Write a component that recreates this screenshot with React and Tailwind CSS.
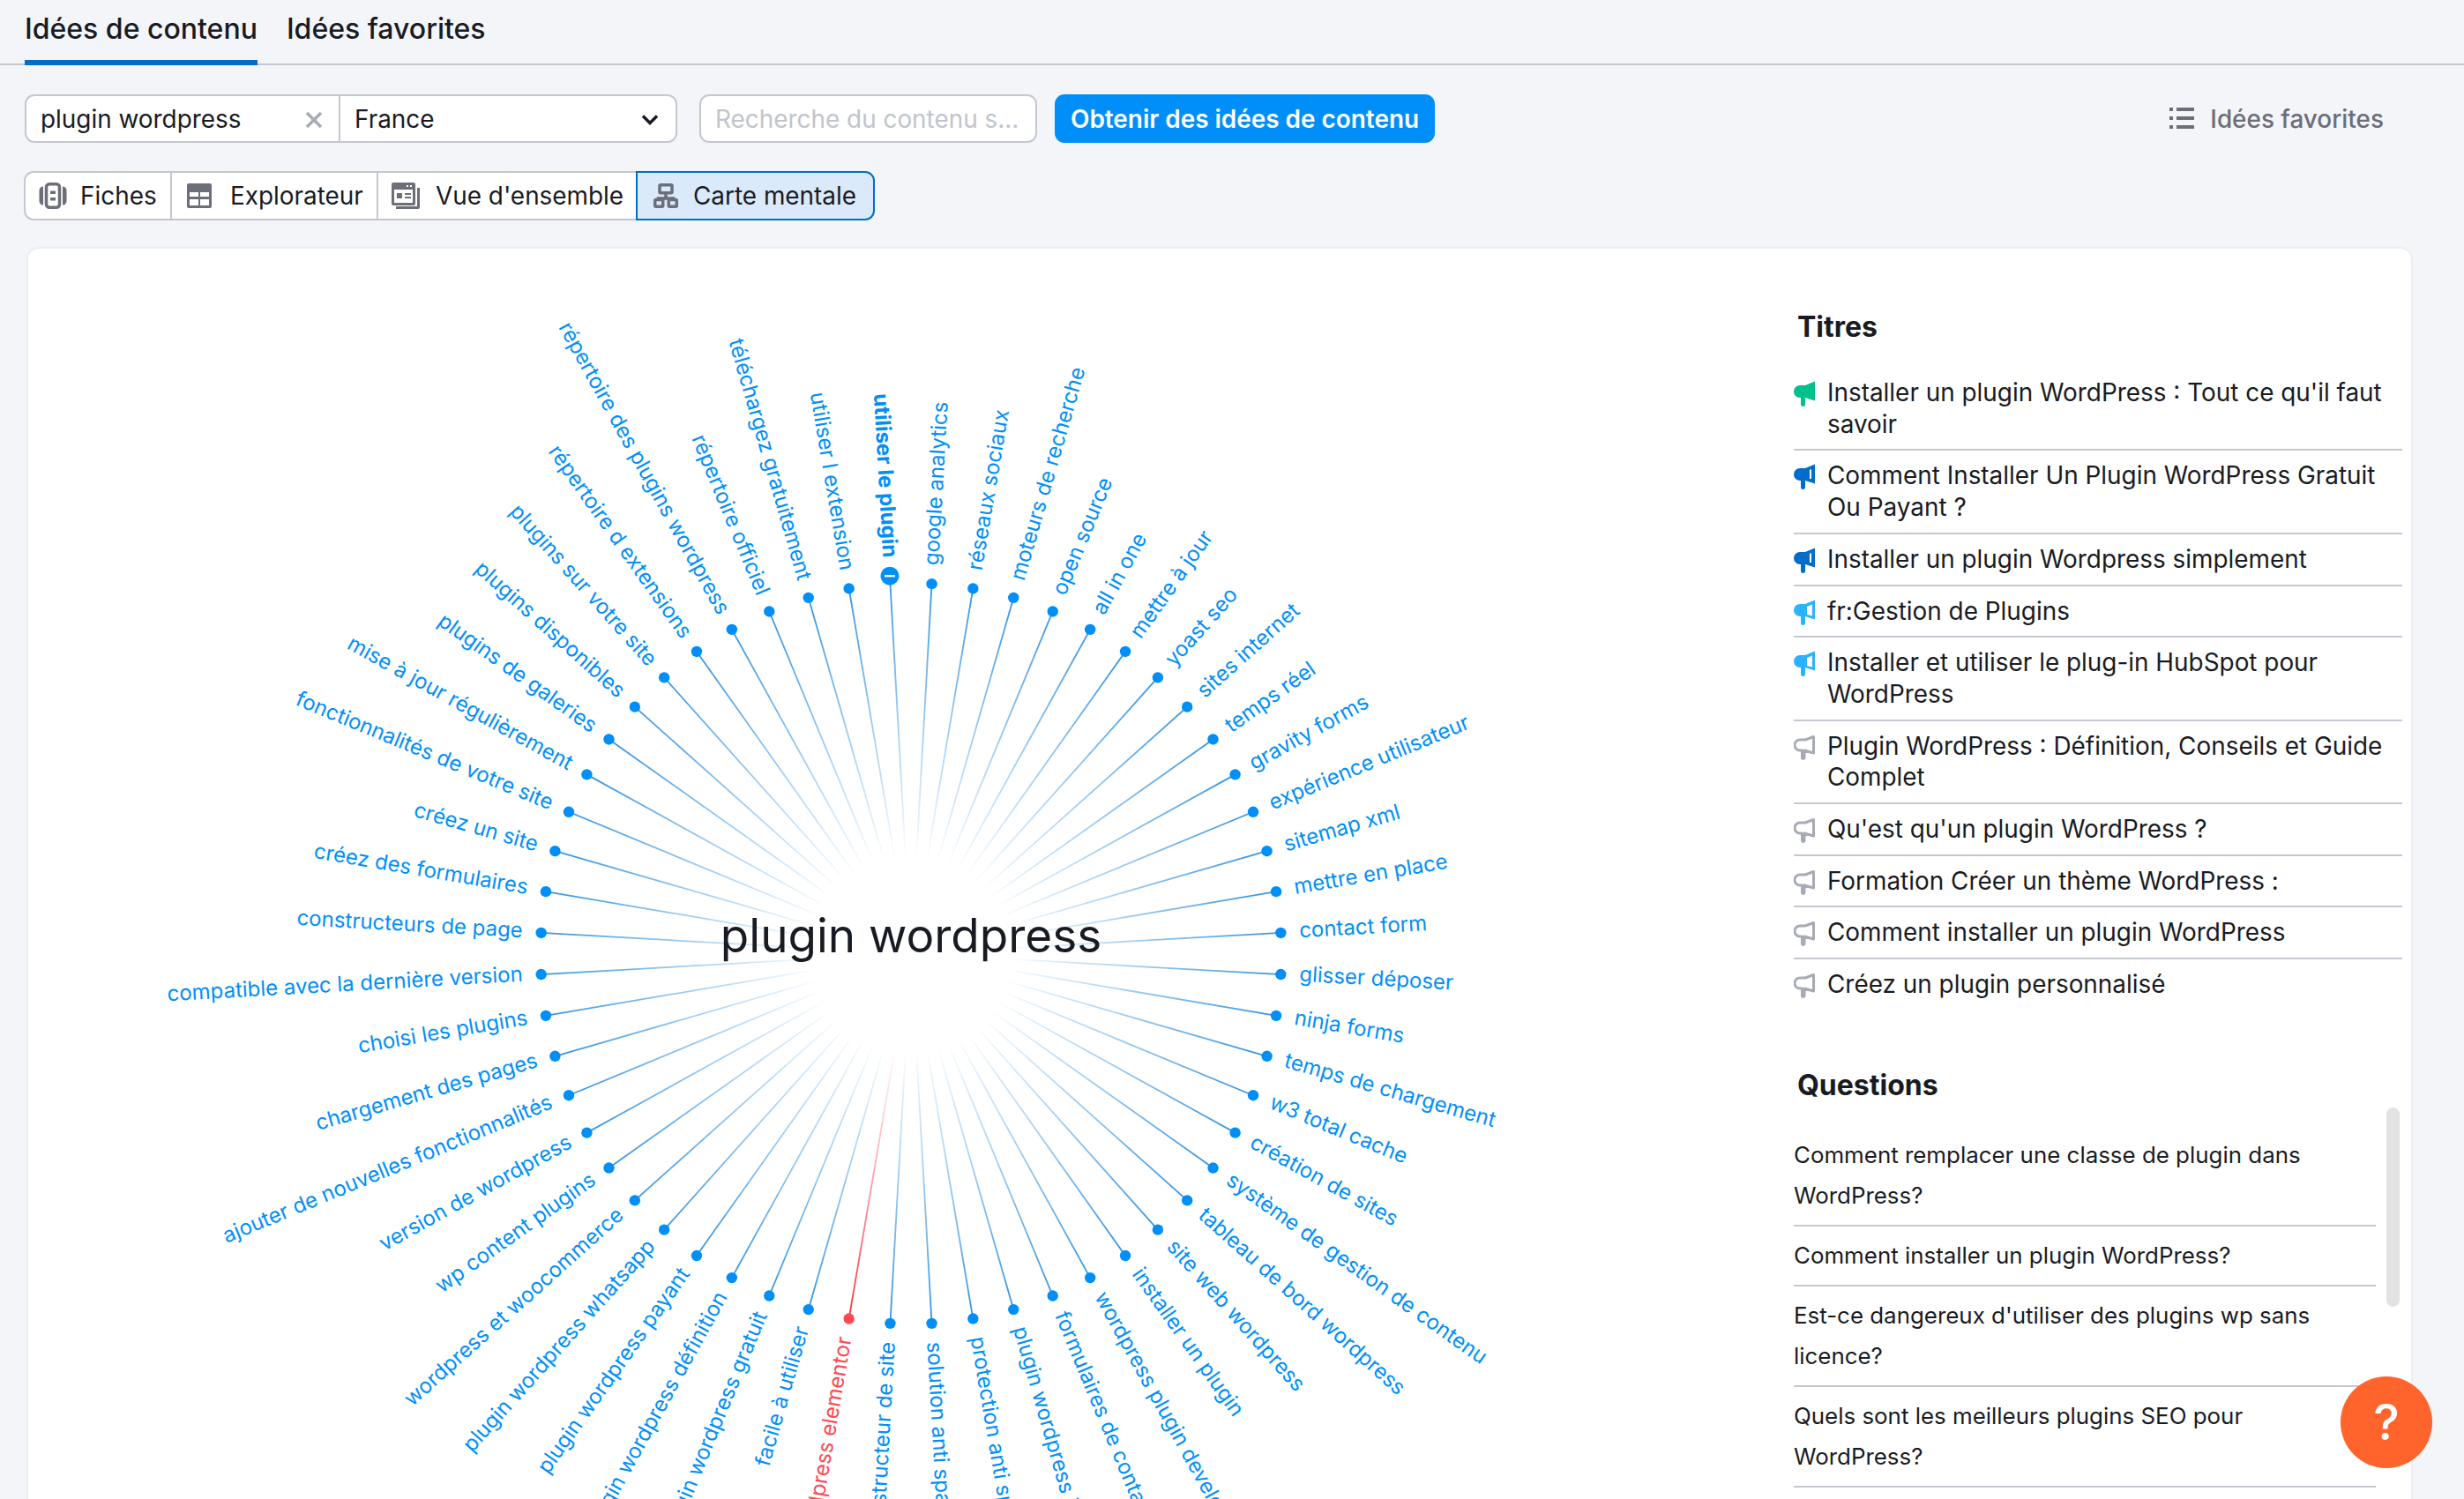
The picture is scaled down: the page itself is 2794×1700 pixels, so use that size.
import React from "react";

const LABELS = [
  "google analytics","réseaux sociaux","moteurs de recherche","open source","all in one","mettre à jour","yoast seo","sites internet","temps réel","gravity forms","expérience utilisateur","sitemap xml","mettre en place","contact form",
  "glisser déposer","ninja forms","temps de chargement","w3 total cache","création de sites","système de gestion de contenu","tableau de bord wordpress","site web wordpress","installer un plugin","wordpress plugin development","formulaires de contact","plugin wordpress installer","protection anti spam","solution anti spam",
  "constructeur de site","wordpress elementor","facile à utiliser","plugin wordpress gratuit","plugin wordpress définition","plugin wordpress payant","plugin wordpress whatsapp","wordpress et woocommerce","wp content plugins","version de wordpress","ajouter de nouvelles fonctionnalités","chargement des pages","choisi les plugins","compatible avec la dernière version",
  "constructeurs de page","créez des formulaires","créez un site","fonctionnalités de votre site","mise à jour régulièrement","plugins de galeries","plugins disponibles","plugins sur votre site","répertoire d extensions","répertoire des plugins wordpress","répertoire officiel","téléchargez gratuitement","utiliser l extension","utiliser le plugin",
];

const CX = 1001, CY = 799.5, R = 420, FADE = 110;

function MindMap() {
  return (
    <svg width="2002" height="1420" className="block shrink-0" style={{ fontFamily: "Inter, sans-serif" }}>
      <defs>
        {LABELS.map((_, i) => {
          const t = ((3.2143 + 6.42857 * i) * Math.PI) / 180;
          const r = i === 55 ? 429 : R;
          const red = i === 29;
          return (
            <linearGradient key={i} id={`g${i}`} gradientUnits="userSpaceOnUse"
              x1={CX + FADE * Math.sin(t)} y1={CY - FADE * Math.cos(t)}
              x2={CX + r * Math.sin(t)} y2={CY - r * Math.cos(t)}>
              <stop offset="0" stopColor={red ? "#ff4953" : "#0f80dc"} stopOpacity="0" />
              <stop offset="1" stopColor={red ? "#ff2f3b" : "#0f80dc"} stopOpacity={red ? 1 : 0.85} />
            </linearGradient>
          );
        })}
      </defs>
      {LABELS.map((label, i) => {
        const deg = 3.2143 + 6.42857 * i;
        const t = (deg * Math.PI) / 180;
        const selected = i === 55;
        const red = i === 29;
        const r = selected ? 429 : R;
        const x = CX + r * Math.sin(t);
        const y = CY - r * Math.cos(t);
        const lx = CX + (r + 21) * Math.sin(t);
        const ly = CY - (r + 21) * Math.cos(t);
        const right = deg < 180;
        const color = red ? "#ff4953" : "#008ff8";
        return (
          <g key={label}>
            <line x1={CX + FADE * Math.sin(t)} y1={CY - FADE * Math.cos(t)} x2={x} y2={y} stroke={`url(#g${i})`} strokeWidth="1.8" />
            <circle cx={x} cy={y} r={selected ? 10.5 : 6.2} fill={color} />
            {selected && <rect x={x - 6} y={y - 1.2} width="12" height="2.4" fill="#fff" />}
            <text x={lx} y={ly} fontSize="24" fontWeight={selected ? 700 : 400} fill={color} dy="0.27em"
              textAnchor={right ? "start" : "end"}
              transform={`rotate(${right ? deg - 90 : deg + 90} ${lx} ${ly})`}>
              {label}
            </text>
          </g>
        );
      })}
      <text x={CX} y={CY - 1.5} textAnchor="middle" fontSize="53" fill="#191b23">plugin wordpress</text>
    </svg>
  );
}

const BASE = "M24 1.5 13 6H7a7 7 0 0 0 0 14h1v7.5a2.5 2.5 0 0 0 5 0V20l11 3.5Z";

function Megaphone({ kind }) {
  if (kind === "green") return (
    <svg width="24" height="30" viewBox="0 0 24 30" className="shrink-0 mt-[3px]"><path d={BASE} fill="#00c08b" /></svg>
  );
  if (kind === "dark") return (
    <svg width="24" height="30" viewBox="0 0 24 30" className="shrink-0 mt-[3px]">
      <path d={BASE} fill="#006dca" />
      <path d="M19 7.5v10.5" stroke="#fff" strokeWidth="2" />
    </svg>
  );
  if (kind === "light") return (
    <svg width="24" height="30" viewBox="0 0 24 30" className="shrink-0 mt-[3px]">
      <path d={BASE} fill="#2bb3ff" />
      <path d="M15 9 21 6.5v13L15 18Z" fill="#fff" />
    </svg>
  );
  return (
    <svg width="24" height="30" viewBox="0 0 24 30" className="shrink-0 mt-[3px]">
      <path d="M22.5 3.5 13 7H7a6 6 0 0 0 0 12h2.500v8.500a1.300 1.300 0 0 0 2.500 0V19l10.500 3Z" fill="none" stroke="#a8abb5" strokeWidth="3" strokeLinejoin="round" />
    </svg>
  );
}

const TITLES = [
  ["green", "Installer un plugin WordPress : Tout ce qu'il faut savoir"],
  ["dark", "Comment Installer Un Plugin WordPress Gratuit Ou Payant ?"],
  ["dark", "Installer un plugin Wordpress simplement"],
  ["light", "fr:Gestion de Plugins"],
  ["light", "Installer et utiliser le plug-in HubSpot pour WordPress"],
  ["grey", "Plugin WordPress : Définition, Conseils et Guide Complet"],
  ["grey", "Qu'est qu'un plugin WordPress ?"],
  ["grey", "Formation Créer un thème WordPress :"],
  ["grey", "Comment installer un plugin WordPress"],
  ["grey", "Créez un plugin personnalisé"],
];

const QUESTIONS = [
  "Comment remplacer une classe de plugin dans WordPress?",
  "Comment installer un plugin WordPress?",
  "Est-ce dangereux d'utiliser des plugins wp sans licence?",
  "Quels sont les meilleurs plugins SEO pour WordPress?",
];

const IconFiches = () => (
  <svg width="32" height="30" viewBox="0 0 32 30" fill="#6c6e79">
    <path d="M5 4.500a4.500 4.500 0 0 0-4.500 4.500v12a4.500 4.500 0 0 0 4.500 4.500Z" />
    <path d="M27 4.500a4.500 4.500 0 0 1 4.500 4.500v12a4.500 4.500 0 0 1-4.500 4.500Z" />
    <rect x="8.500" y="1.750" width="15" height="26.500" rx="3.500" fill="none" stroke="#6c6e79" strokeWidth="3.500" />
    <rect x="13" y="9.500" width="6" height="3.500" />
    <rect x="13" y="17" width="6" height="3.500" />
  </svg>
);
const IconTable = () => (
  <svg width="28" height="28" viewBox="0 0 28 28" fill="#6c6e79">
    <path fillRule="evenodd" d="M2 0h24a2 2 0 0 1 2 2v24a2 2 0 0 1-2 2H2a2 2 0 0 1-2-2V2a2 2 0 0 1 2-2Zm1 10v5h10V10Zm12 0v5h10V10ZM3 18v7h10v-7Zm12 0v7h10v-7Z" />
  </svg>
);
const IconVue = () => (
  <svg width="32" height="30" viewBox="0 0 32 30" fill="#6c6e79">
    <path fillRule="evenodd" d="M2 0h23a2 2 0 0 1 2 2v22a2 2 0 0 1-2 2H2a2 2 0 0 1-2-2V2a2 2 0 0 1 2-2Zm1 8v15h21V8Zm14-5v2h2V3Zm4 0v2h2V3ZM6 12h6v6H6Zm9 0h7v2h-7Zm0 4h7v2h-7Z" />
    <path d="M29 6h3v22a2 2 0 0 1-2 2H5v-3h24Z" />
  </svg>
);
const IconCarte = () => (
  <svg width="28" height="28" viewBox="0 0 28 28" fill="none" stroke="#6c6e79" strokeWidth="3.500">
    <rect x="7" y="1.750" width="14" height="9" rx="1" />
    <path d="M14 11v6M5.500 18v-1h17v1" />
    <rect x="1.750" y="18.500" width="9" height="7.750" rx="1" />
    <rect x="17.250" y="18.500" width="9" height="7.750" rx="1" />
  </svg>
);

export default function App() {
  return (
    <div className="relative w-[2794px] h-[1700px] overflow-hidden bg-[#f4f5f9] text-[#191b23] text-[27.9px] leading-[35.7px] font-['Inter',sans-serif]">
      <div className="h-[74px] border-b-2 border-[#c4c7cf] pl-[28px] flex gap-[33px]">
        <div className="h-[74px] border-b-[6px] border-[#006dca] flex items-center pb-[2px] text-[32px] font-medium">Idées de contenu</div>
        <div className="h-[74px] flex items-center pb-[8px] text-[32px] font-medium">Idées favorites</div>
      </div>

      <div className="mt-[33px] pl-[28px] pr-[91px] h-[55px] flex items-center">
        <div className="w-[740px] h-[55px] flex bg-white border-2 border-[#c4c7cf] rounded-[11px]">
          <div className="w-[356px] flex items-center justify-between pt-[2px] pl-[16px] pr-[18px] border-r-2 border-[#c4c7cf]">
            <span>plugin wordpress</span>
            <svg width="20" height="20" viewBox="0 0 20 20" stroke="#a8abb5" strokeWidth="3.500"><path d="M2 2l16 16M18 2 2 18" /></svg>
          </div>
          <div className="flex-1 flex items-center justify-between pt-[2px] pl-[16px] pr-[19px]">
            <span>France</span>
            <svg width="20" height="14" viewBox="0 0 20 14" fill="none" stroke="#191b23" strokeWidth="3.500"><path d="M2 2.500l8 8 8-8" /></svg>
          </div>
        </div>
        <div className="ml-[25px] w-[383px] h-[55px] flex items-center pt-[2px] pl-[16px] bg-white border-2 border-[#c4c7cf] rounded-[11px] text-[#c2c4cc]">Recherche du contenu s...</div>
        <div className="ml-[20px] w-[431px] h-[55px] flex items-center justify-center pt-[2px] bg-[#008ff8] rounded-[11px] text-white font-semibold">Obtenir des idées de contenu</div>
        <div className="ml-auto flex items-center gap-[18px] text-[#6c6e79] font-medium">
          <svg width="28" height="24" viewBox="0 0 28 24" fill="#6c6e79">
            <rect x="0" y="0" width="4" height="4" /><rect x="8" y="0" width="20" height="4" />
            <rect x="0" y="10" width="4" height="4" /><rect x="8" y="10" width="20" height="4" />
            <rect x="0" y="20" width="4" height="4" /><rect x="8" y="20" width="20" height="4" />
          </svg>
          <span className="pt-[2px]">Idées favorites</span>
        </div>
      </div>

      <div className="mt-[32px] ml-[27px] h-[56px] flex w-fit">
        <div className="w-[168px] flex items-center pl-[15px] gap-[15px] bg-white border-2 border-[#c4c7cf] rounded-l-[11px]"><IconFiches /><span className="pt-[2px]">Fiches</span></div>
        <div className="w-[234px] flex items-center pl-[17px] gap-[21px] bg-white border-y-2 border-r-2 border-[#c4c7cf]"><IconTable /><span className="pt-[2px]">Explorateur</span></div>
        <div className="w-[292px] flex items-center pl-[15px] gap-[18px] bg-white border-y-2 border-[#c4c7cf]"><IconVue /><span className="pt-[2px]">Vue d'ensemble</span></div>
        <div className="w-[271px] flex items-center pl-[18px] gap-[17px] bg-[#dbeafa] border-2 border-[#006dca] rounded-r-[11px]"><IconCarte /><span className="pt-[2px]">Carte mentale</span></div>
      </div>

      <div className="mt-[30px] ml-[30px] w-[2706px] h-[1500px] flex bg-white border-2 border-[#eceef2] rounded-t-[14px]">
        <MindMap />
        <div className="relative w-[690px] shrink-0">
          <div className="mt-[69px] pl-[4px] text-[32px] leading-[40px] font-bold">Titres</div>
          <div className="mt-[26px]">
            {TITLES.map(([kind, text], i) => (
              <div key={text} className={`flex gap-[14px] pt-[11px] pb-[10px] ${i < TITLES.length - 1 ? "border-b-2 border-[#c4c8d0]" : ""}`}>
                <Megaphone kind={kind} />
                <span className="block w-[640px]">{text}</span>
              </div>
            ))}
          </div>
          <div className="mt-[66px] pl-[4px] text-[32px] leading-[40px] font-bold">Questions</div>
          <div className="relative mt-[26px] w-[660px] text-[25.9px] leading-[46px]">
            {QUESTIONS.map((q) => (
              <div key={q} className="py-[10px] border-b-2 border-[#c4c8d0] pr-[40px]">{q}</div>
            ))}
          </div>
          <div className="absolute left-[672px] top-[974px] w-[15px] h-[226px] rounded-full bg-[#e3e3e3]"></div>
        </div>
      </div>

      <div className="absolute left-[2654px] top-[1561px] w-[104px] h-[104px] rounded-full bg-[#ff642d] flex items-center justify-center text-white text-[56px] leading-none font-medium">?</div>
    </div>
  );
}
